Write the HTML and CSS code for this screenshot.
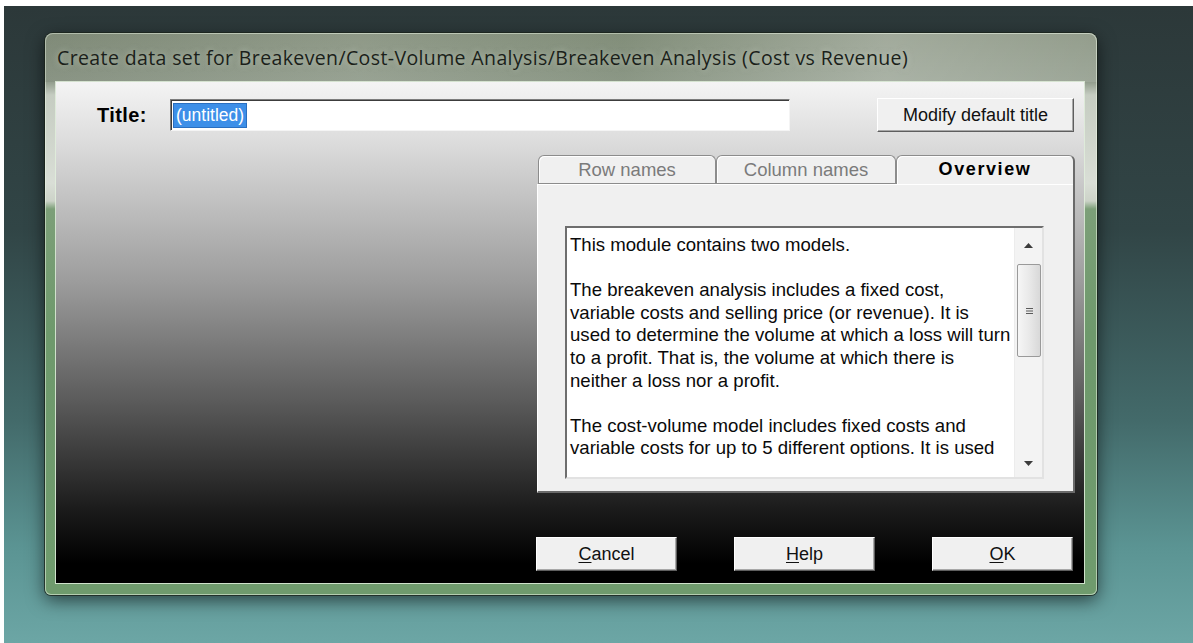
FILE: index.html
```html
<!DOCTYPE html>
<html lang="en">
<head>
<meta charset="utf-8">
<title>Create data set</title>
<link rel="stylesheet" href="styles.css">
</head>
<body>
<div class="desktop">
  <div class="window">
    <div class="titlebar">
      <span class="caption">Create data set for Breakeven/Cost-Volume Analysis/Breakeven Analysis (Cost vs Revenue)</span>
    </div>
    <div class="client">
      <div class="title-row">
        <label class="title-label">Title:</label>
        <div class="title-input"><span class="selection">(untitled)</span></div>
        <button class="btn btn-modify">Modify default title</button>
      </div>
      <div class="main">
        <div class="tabs-col">
          <div class="tabstrip">
            <div class="tab tab-row">Row names</div>
            <div class="tab tab-col">Column names</div>
            <div class="tab tab-active">Overview</div>
          </div>
          <div class="panel">
            <div class="memo">
              <div class="memo-text">
                <p>This module contains two models.</p>
                <p>The breakeven analysis includes a fixed cost,<br>variable costs and selling price (or revenue). It is<br>used to determine the volume at which a loss will turn<br>to a profit. That is, the volume at which there is<br>neither a loss nor a profit.</p>
                <p>The cost-volume model includes fixed costs and<br>variable costs for up to 5 different options. It is used</p>
              </div>
              <div class="vscroll">
                <div class="arrow arrow-up">
                  <svg width="9" height="5" viewBox="0 0 9 5"><path d="M0 5 L4.5 0 L9 5 Z" fill="#3c3c3c"/></svg>
                </div>
                <div class="thumb">
                  <svg width="7" height="8" viewBox="0 0 7 8"><path d="M0 1.5 H7 M0 4 H7 M0 6.5 H7" stroke="#5a5a5a" stroke-width="1"/></svg>
                </div>
                <div class="track"></div>
                <div class="arrow arrow-down">
                  <svg width="9" height="5" viewBox="0 0 9 5"><path d="M0 0 L4.5 5 L9 0 Z" fill="#3c3c3c"/></svg>
                </div>
              </div>
            </div>
          </div>
          <div class="actions">
            <button class="btn"><u>C</u>ancel</button>
            <button class="btn"><u>H</u>elp</button>
            <button class="btn"><u>O</u>K</button>
          </div>
        </div>
      </div>
    </div>
  </div>
</div>
</body>
</html>
```

FILE: styles.css
```css
html, body {
  margin: 0;
  padding: 0;
  background: #ffffff;
  overflow: hidden;
}

/* desktop behind the dialog */
.desktop {
  margin: 6px 0 0 4px;
  height: 637px;
  box-sizing: border-box;
  padding: 27px 0 0 41px;
  background: linear-gradient(to bottom, #2c3839 0%, #314546 35%, #436a6a 65%, #5b9493 85%, #6ca6a5 100%);
}

/* glass window frame */
.window {
  width: 1052px;
  height: 562px;
  box-sizing: border-box;
  padding: 0 13px 12px 11px;
  border-radius: 8px 8px 6px 6px;
  display: flex;
  flex-direction: column;
  background: linear-gradient(to bottom, #87927f 0px, #929d8d 49px, #c5ccc1 62px, #d9ded6 150px, #ccd3c8 168px, #7c9f78 176px, #6e996c 300px, #6f9b6d 100%);
  box-shadow: 0 0 0 1px rgba(25, 35, 25, 0.75), inset 0 0 0 1px rgba(235, 245, 230, 0.55), 0 5px 18px rgba(0, 0, 0, 0.6);
}

.titlebar {
  height: 49px;
  display: flex;
  align-items: center;
  margin: 0 -13px 0 -11px;
  padding-left: 12px;
  border-radius: 8px 8px 0 0;
  background: linear-gradient(90deg, rgba(60, 70, 55, 0.10) 0%, rgba(255, 255, 255, 0.06) 30%, rgba(90, 110, 80, 0.12) 55%, rgba(255, 255, 255, 0.22) 80%, rgba(255, 255, 255, 0.10) 100%);
}

.caption {
  font-family: "Open Sans", "Noto Sans", sans-serif;
  font-size: 19.5px;
  letter-spacing: 0.38px;
  color: #1b1f1a;
  white-space: nowrap;
  text-shadow: 0 0 6px rgba(230, 240, 225, 0.5);
}

/* dialog client area */
.client {
  flex: 1;
  display: flex;
  flex-direction: column;
  background: linear-gradient(to bottom, #f4f4f4 0%, #dcdcdc 12%, #9c9c9c 40%, #5a5a5a 64%, #1c1c1c 85%, #000000 96%);
  box-shadow: 0 0 0 1px rgba(225, 238, 220, 0.85);
  font-family: "Liberation Sans", Arial, sans-serif;
  font-size: 18px;
  color: #111;
}

.title-row {
  display: flex;
  align-items: center;
  height: 34px;
  margin-top: 16px;
  padding-left: 41px;
}

.title-label {
  width: 73px;
  font-weight: bold;
  font-size: 20px;
  letter-spacing: 0.4px;
  color: #000;
}

.title-input {
  width: 620px;
  height: 32px;
  box-sizing: border-box;
  background: #fff;
  border-top: 1px solid #7c7c7c;
  border-left: 1px solid #7c7c7c;
  border-right: 1px solid #f4f4f4;
  border-bottom: 1px solid #f4f4f4;
  box-shadow: inset 1px 1px 0 #3c3c3c;
  display: flex;
  align-items: center;
  padding-left: 3px;
}

.selection {
  background: #3d8fe8;
  color: #fff;
  font-size: 17.5px;
  padding: 1px 2px;
  outline: 1px solid #2a6fc0;
}

.btn {
  font-family: "Liberation Sans", Arial, sans-serif;
  font-size: 18px;
  color: #111;
  background: #f0f0f0;
  border: none;
  border-top: 1px solid #ffffff;
  border-left: 1px solid #ffffff;
  border-right: 1px solid #5e5e5e;
  border-bottom: 1px solid #5e5e5e;
  box-shadow: inset -1px -1px 0 #a8a8a8;
  padding: 0;
  height: 34px;
}

.btn u {
  text-decoration-thickness: 1px;
  text-underline-offset: 2px;
}

.btn-modify {
  width: 197px;
  margin-left: auto;
  margin-right: 10px;
}

.main {
  flex: 1;
  display: flex;
  padding-left: 481px;
}

.tabs-col {
  width: 538px;
  display: flex;
  flex-direction: column;
  margin-top: 23px;
}

.tabstrip {
  display: flex;
  height: 28px;
  position: relative;
  z-index: 1;
}

.tab {
  box-sizing: border-box;
  height: 28px;
  background: #f0f0f0;
  border: 1px solid #8c8c8c;
  border-bottom: none;
  border-radius: 6px 6px 0 0;
  box-shadow: inset 1px 1px 0 #ffffff;
  text-align: center;
  line-height: 27px;
  color: #7b7b7b;
  font-size: 18.5px;
}

.tab-row { width: 178px; margin-left: 1px; }
.tab-col { width: 180px; }

.tab-active {
  width: 179px;
  height: 29px;
  color: #000;
  font-weight: bold;
  font-size: 18px;
  letter-spacing: 1.6px;
  border-right: 2px solid #6a6a6a;
}

.panel {
  height: 310px;
  box-sizing: border-box;
  background: #f0f0f0;
  border-top: 1px solid #8c8c8c;
  border-left: 1px solid #ffffff;
  border-right: 2px solid #6a6a6a;
  border-bottom: 2px solid #6a6a6a;
  box-shadow: inset 0 1px 0 #ffffff;
  padding: 42px 0 0 27px;
}

/* read-only overview memo with its scrollbar */
.memo {
  width: 479px;
  height: 253px;
  box-sizing: border-box;
  display: flex;
  background: #fff;
  border-top: 2px solid #6e6e6e;
  border-left: 2px solid #6e6e6e;
  border-right: 2px solid #e2e2e2;
  border-bottom: 2px solid #e2e2e2;
}

.memo-text {
  flex: 1;
  overflow: hidden;
  padding: 6px 0 0 3px;
  font-size: 18.6px;
  line-height: 22.6px;
  color: #0a0a0a;
  white-space: nowrap;
}

.memo-text p {
  margin: 0 0 22.6px 0;
}

.vscroll {
  width: 27px;
  display: flex;
  flex-direction: column;
  background: #f3f3f3;
  border-left: 1px solid #ececec;
}

.arrow {
  height: 30px;
  display: flex;
  align-items: center;
  justify-content: center;
}

.arrow-up { padding-top: 2px; }

.thumb {
  height: 93px;
  margin: 4px 1px 0 2px;
  box-sizing: border-box;
  border: 1px solid #9a9a9a;
  border-radius: 2px;
  background: linear-gradient(90deg, #f6f6f6 0%, #e9e9e9 50%, #d8d8d8 100%);
  display: flex;
  align-items: center;
  justify-content: center;
}

.track { flex: 1; }

.arrow-down { height: 28px; }

.actions {
  display: grid;
  grid-template-columns: 141px 141px 141px;
  column-gap: 57px;
  margin-top: 44px;
  margin-left: -1px;
}
```
